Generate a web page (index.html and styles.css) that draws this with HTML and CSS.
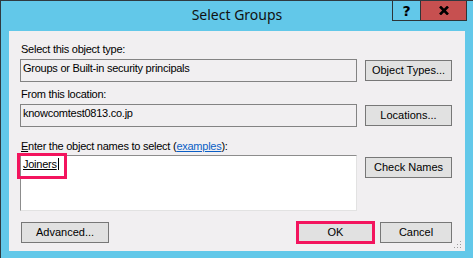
FILE: index.html
```html
<!DOCTYPE html>
<html>
<head>
    <title>Select Groups</title>
    <link rel="stylesheet" href="styles.css">
</head>
<body>

<div class="window">
    <div class="titlebar">
        <div class="title">Select Groups</div>
        <div class="caption-buttons">
            <div class="cap help">?</div>
            <div class="cap close">
                <svg width="10" height="9" viewBox="0 0 10 9">
                    <path d="M1 0.5 L9 8.5 M9 0.5 L1 8.5" stroke="#000000" stroke-width="2.6" fill="none"/>
                </svg>
            </div>
        </div>
    </div>

    <div class="panel">
        <div class="label">Select this object type:</div>
        <div class="row">
            <div class="field">Groups or Built-in security principals</div>
            <button class="btn side">Object Types...</button>
        </div>

        <div class="label gap">From this location:</div>
        <div class="row">
            <div class="field">knowcomtest0813.co.jp</div>
            <button class="btn side">Locations...</button>
        </div>

        <div class="label gap-big"><u>E</u>nter the object names to select (<a href="#" class="link">examples</a>):</div>
        <div class="row names-row">
            <div class="names">
                <span class="resolved">Joiners</span><span class="caret"></span>
                <div class="highlight name-mark"></div>
            </div>
            <button class="btn side check">Check Names</button>
        </div>

        <div class="bottom-row">
            <button class="btn advanced">Advanced...</button>
            <div class="spacer"></div>
            <button class="btn ok">OK</button>
            <button class="btn cancel">Cancel</button>
        </div>

        <svg class="grip" width="8" height="8" viewBox="0 0 8 8">
            <rect x="6" y="0" width="1" height="1" fill="#9c9c9c"/>
            <rect x="3" y="3" width="1" height="1" fill="#9c9c9c"/>
            <rect x="6" y="3" width="1" height="1" fill="#9c9c9c"/>
            <rect x="0" y="6" width="1" height="1" fill="#9c9c9c"/>
            <rect x="3" y="6" width="1" height="1" fill="#9c9c9c"/>
            <rect x="6" y="6" width="1" height="1" fill="#9c9c9c"/>
        </svg>
    </div>
</div>

</body>
</html>
```

FILE: styles.css
```css
        body {
            margin: 0;
            font-family: "Liberation Sans", Arial, sans-serif;
            font-size: 11px;
            color: #000;
            background-color: #62c8e9;
        }
        .window {
            width: 472px;
            height: 257px;
            border-top: 1px solid #2f3a40;
            border-left: 1px solid #2f3a40;
            background-color: #62c8e9;
        }

        /* title bar */
        .titlebar {
            display: grid;
            grid-template-columns: 1fr auto 1fr;
            height: 30px;
        }
        .title {
            grid-column: 2;
            font-family: "Noto Sans", "Open Sans", sans-serif;
            font-size: 14px;
            line-height: 20px;
            padding-top: 4px;
            color: #111;
        }
        .caption-buttons {
            grid-column: 3;
            justify-self: end;
            align-self: start;
            display: flex;
            margin-right: 6px;
        }
        .cap {
            display: flex;
            align-items: center;
            justify-content: center;
            height: 20px;
            box-sizing: border-box;
            border: 1px solid #2d3538;
            border-top: none;
            font-family: "DejaVu Sans", sans-serif;
            font-weight: bold;
            font-size: 14px;
            color: #000;
        }
        .help {
            width: 29px;
            background-color: #62c8e9;
        }
        .close {
            width: 46px;
            border-left: none;
            background-color: #c75050;
        }

        /* dialog body */
        .panel {
            position: relative;
            width: 456px;
            height: 220px;
            margin-left: 8px;
            box-sizing: border-box;
            padding: 12px 13px 0 11px;
            background-color: #f1eff1;
        }
        .label {
            line-height: 13px;
            padding-left: 1px;
            letter-spacing: -0.25px;
        }
        .gap {
            margin-top: 6px;
        }
        .gap-big {
            margin-top: 13px;
        }
        .link {
            color: #0b5fc6;
        }
        .row {
            display: flex;
            align-items: center;
            gap: 8px;
            margin-top: 3px;
        }
        .field {
            width: 337px;
            height: 23px;
            box-sizing: border-box;
            border: 1px solid #838383;
            padding: 2px 2px 0;
            line-height: 13px;
            letter-spacing: -0.25px;
            white-space: nowrap;
        }
        .btn {
            height: 21px;
            box-sizing: border-box;
            margin: 0;
            padding: 0;
            border: 1px solid #777;
            background-color: #e1e1e1;
            font-family: "Liberation Sans", Arial, sans-serif;
            font-size: 11px;
            line-height: 13px;
            color: #000;
        }
        .side {
            width: 87px;
        }

        .names-row {
            align-items: flex-start;
            margin-top: 2px;
        }
        .names {
            position: relative;
            width: 337px;
            height: 56px;
            box-sizing: border-box;
            border-top: 1px solid #8c8c8c;
            border-left: 1px solid #8c8c8c;
            border-right: 1px solid #e2e2e2;
            border-bottom: 1px solid #e2e2e2;
            background-color: #fff;
            padding: 2px 2px 0;
            line-height: 13px;
            letter-spacing: -0.25px;
        }
        .resolved {
            text-decoration: underline;
        }
        .caret {
            display: inline-block;
            width: 1px;
            height: 12px;
            margin-left: 1px;
            vertical-align: -2px;
            background-color: #000;
        }
        .check {
            margin-top: 2px;
        }

        /* red annotation boxes */
        .highlight {
            position: absolute;
            box-sizing: border-box;
            border: 3px solid #f3145e;
        }
        .name-mark {
            left: -4px;
            top: -3px;
            width: 50px;
            height: 26px;
        }

        .bottom-row {
            display: flex;
            align-items: center;
            margin-top: 10px;
        }
        .advanced {
            width: 88px;
            margin-left: 1px;
        }
        .spacer {
            flex: 1;
        }
        .ok {
            width: 79px;
            height: 23px;
            border: 3px solid #f3145e;
            margin-right: 5px;
        }
        .cancel {
            width: 72px;
        }
        .grip {
            position: absolute;
            right: 3px;
            bottom: 2px;
        }
```
